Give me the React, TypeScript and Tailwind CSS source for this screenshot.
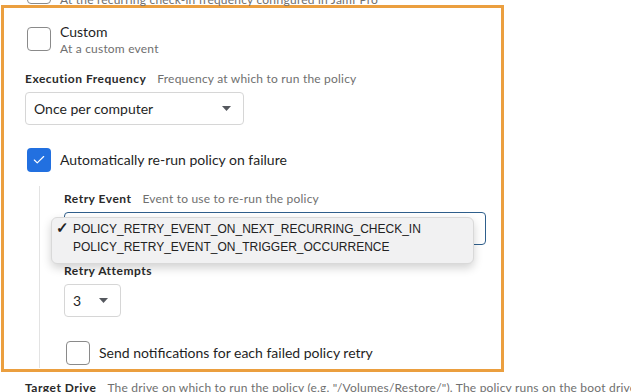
import { Check } from "lucide-react";

// small filled caret used by the select boxes
function Caret() {
  return (
    <svg width="9" height="5" viewBox="0 0 9 5" className="shrink-0">
      <path d="M0 0h9L4.5 5z" fill="#55585e" />
    </svg>
  );
}

function Box({ checked = false }: { checked?: boolean }) {
  if (checked) {
    return (
      <div className="w-6 h-6 rounded-[4px] bg-[#2270e0] flex items-center justify-center shrink-0">
        <Check size={14} strokeWidth={2} color="#fff" />
      </div>
    );
  }
  return <div className="w-6 h-6 rounded-[4px] border border-[#8a8a8a] bg-white shrink-0" />;
}

function Label({ title, hint }: { title: string; hint?: string }) {
  return (
    <div className="flex items-baseline gap-[11px] text-[12px] leading-[14px] whitespace-nowrap">
      <span className="font-bold text-[#2a2a2a] tracking-[0.5px]">{title}</span>
      {hint && <span className="text-[#6f6f6f] tracking-[0.2px]">{hint}</span>}
    </div>
  );
}

export default function App() {
  return (
    <div
      className="w-[631px] h-[392px] overflow-hidden bg-white text-[#1f1f1f]"
      style={{ fontFamily: "Lato, 'Open Sans', sans-serif" }}
    >
      {/* row from above, mostly scrolled out */}
      <div className="h-[5px] flex flex-col">
        <div className="shrink-0 flex items-end gap-[9px] pl-[27px] -mt-[23px] h-[27px]">
          <Box />
          <span className="text-[12px] leading-[14px] text-[#6f6f6f] tracking-[0.2px] mb-[-3px]">
            At the recurring check-in frequency configured in Jamf Pro
          </span>
        </div>
      </div>

      {/* highlighted block */}
      <div className="ml-[1px] w-[503px] h-[367px] border-[3px] border-[#eb9f3f] pt-[16px] pl-[21px]">
        <div className="flex gap-[9px] ml-[2px]">
          <div className="mt-[3px]">
            <Box />
          </div>
          <div>
            <div className="text-[14px] leading-[16px]">Custom</div>
            <div className="text-[12px] leading-[14px] text-[#6f6f6f] mt-[2px] tracking-[0.2px]">At a custom event</div>
          </div>
        </div>

        <div className="mt-[16px]">
          <Label title="Execution Frequency" hint="Frequency at which to run the policy" />
        </div>
        <div className="mt-[6px] w-[219px] h-[33px] rounded-[4px] border border-[#d6d6d6] flex items-center justify-between pl-[8px] pr-[12px]">
          <span className="text-[14px]">Once per computer</span>
          <Caret />
        </div>

        <div className="mt-[23px] ml-[2px] flex items-center gap-[9px]">
          <Box checked />
          <span className="text-[14px] -mt-[2px]">Automatically re-run policy on failure</span>
        </div>

        {/* nested retry options */}
        <div className="flex mt-[14px] ml-[14px] h-[182px]">
          <div className="w-px bg-[#e3e3e3]" />
          <div className="pl-[24px] pt-[6px]">
            <Label title="Retry Event" hint="Event to use to re-run the policy" />
            <div className="relative mt-[6px] w-[422px] h-[33px] rounded-[4px] border border-[#2f5f8c]">
              <div
                className="absolute left-[-14px] top-[4px] w-[423px] h-[47px] rounded-[6px] bg-[#f1f1f2] border border-[#d9d9d9] shadow-[0_4px_10px_rgba(0,0,0,0.18)] pt-[1px] text-[12px] leading-[18px] text-[#222]"
                style={{ fontFamily: "'Liberation Sans', Arial, sans-serif" }}
              >
                <div className="flex items-baseline">
                  <span className="w-[21px] pl-[4px] text-[15px] font-bold">✓</span>
                  <span>POLICY_RETRY_EVENT_ON_NEXT_RECURRING_CHECK_IN</span>
                </div>
                <div className="flex">
                  <span className="w-[21px]" />
                  <span>POLICY_RETRY_EVENT_ON_TRIGGER_OCCURRENCE</span>
                </div>
              </div>
            </div>

            <div className="mt-[19px]">
              <Label title="Retry Attempts" />
            </div>
            <div className="mt-[6px] w-[57px] h-[33px] rounded-[4px] border border-[#d6d6d6] flex items-center justify-between pl-[8px] pr-[12px]">
              <span className="text-[14px]">3</span>
              <Caret />
            </div>

            <div className="mt-[24px] ml-[2px] flex items-center gap-[9px]">
              <Box />
              <span className="text-[14px] -mt-[2px]">Send notifications for each failed policy retry</span>
            </div>
          </div>
        </div>
      </div>

      <div className="mt-[9px] pl-[25px]">
        <Label
          title="Target Drive"
          hint={'The drive on which to run the policy (e.g. "/Volumes/Restore/"). The policy runs on the boot drive by default'}
        />
      </div>
    </div>
  );
}
